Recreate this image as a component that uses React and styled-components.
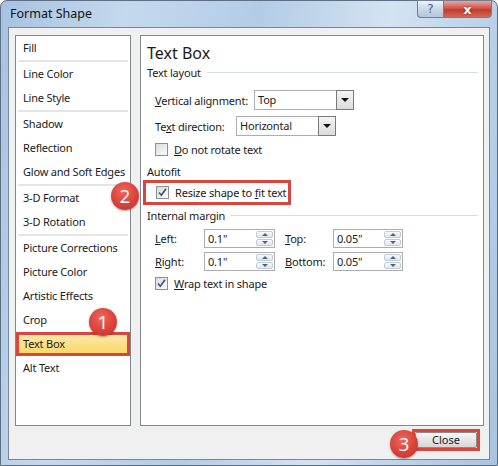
import styled, { createGlobalStyle } from "styled-components";

const GlobalStyle = createGlobalStyle`
  html, body {
    margin: 0;
    padding: 0;
  }
  body {
    width: 498px;
    height: 466px;
    overflow: hidden;
    font-family: "Noto Sans", "Open Sans", sans-serif;
    color: #1b1b1b;
  }
`;

const Window = styled.div`
  width: 498px;
  height: 466px;
  box-sizing: border-box;
  display: flex;
  flex-direction: column;
  padding: 0 7px 5px 7px;
  border: 1px solid #5d6f84;
  border-radius: 7px 7px 0 0;
  background: linear-gradient(100deg, #a7c2df 0%, #c4d9ee 22%, #b3cce6 45%, #d3e3f2 68%, #b9d0e8 86%, #a9c3df 100%);
`;

const TitleBar = styled.div`
  height: 26px;
  display: flex;
  align-items: flex-start;
  margin-right: -2px;
`;

const Title = styled.div`
  font-size: 12.5px;
  line-height: 26px;
  padding-left: 2px;
  color: #111;
`;

const CaptionButton = styled.div`
  height: 18px;
  margin-top: -1px;
  display: flex;
  align-items: center;
  justify-content: center;
  box-sizing: border-box;
  border: 1px solid #6e7f95;
  font-family: "DejaVu Sans", sans-serif;
  font-weight: bold;
`;

const HelpButton = styled(CaptionButton)`
  margin-left: auto;
  width: 26px;
  border-right: none;
  border-radius: 0 0 0 4px;
  background: linear-gradient(#eef3f9, #c9d7e7 50%, #b3c6dc);
  color: #4b5e77;
  font-size: 12px;
  font-weight: normal;
`;

const CloseButton = styled(CaptionButton)`
  width: 49px;
  border-radius: 0 0 4px 0;
  background: linear-gradient(#e9a79f, #d3554b 45%, #c03a31 55%, #d16a55);
  color: #fff;
  font-size: 13px;
  text-shadow: 0 0 2px #6b1410;
`;

const Client = styled.div`
  flex: 1;
  display: flex;
  flex-direction: column;
  background: #f0f0f0;
  border: 1px solid #76879b;
`;

const MainRow = styled.div`
  height: 391px;
  display: flex;
  gap: 9px;
  padding: 7px 5px 0 6px;
`;

const CategoryList = styled.div`
  width: 116px;
  box-sizing: border-box;
  border: 1px solid #828790;
  background: #fff;
  font-size: 11px;
  letter-spacing: -0.2px;
`;

const Item = styled.div`
  position: relative;
  height: 24px;
  box-sizing: border-box;
  line-height: ${(p) => (p.$active ? "18px" : "24px")};
  padding-left: ${(p) => (p.$active ? "4px" : "7px")};
  ${(p) =>
    p.$active &&
    `
    border: 3px solid #d8463e;
    background: linear-gradient(#fde9a6, #fbd86c);
  `}
`;

const Separator = styled.div`
  height: 2px;
  margin: 0 2px;
  background: #e5e5e5;
`;

const Panel = styled.div`
  flex: 1;
  box-sizing: border-box;
  border: 1px solid #828790;
  background: #fff;
  padding: 0 5px 0 6px;
  font-size: 11px;
  letter-spacing: -0.2px;
`;

const Heading = styled.div`
  margin-top: 7px;
  font-size: 16px;
  line-height: 20px;
  letter-spacing: 0;
`;

const GroupHeader = styled.div`
  display: flex;
  align-items: center;
  height: 16px;
  margin-top: ${(p) => p.$top}px;
  &::after {
    content: "";
    flex: 1;
    height: 1px;
    margin-left: 6px;
    background: ${(p) => (p.$line ? "#d5dde3" : "transparent")};
  }
`;

const Row = styled.div`
  display: flex;
  align-items: center;
  padding-left: 8px;
  margin-top: ${(p) => p.$top}px;
  height: ${(p) => p.$h || 20}px;
`;

const Label = styled.span`
  width: ${(p) => p.$w}px;
  flex-shrink: 0;
  white-space: nowrap;
`;

const Key = styled.span`
  text-decoration: underline;
  text-underline-offset: 1px;
`;

const Select = styled.div`
  width: 100px;
  height: 20px;
  box-sizing: border-box;
  display: flex;
  border: 1px solid #abadb3;
  background: #fff;
`;

const SelectValue = styled.div`
  flex: 1;
  line-height: 18px;
  padding-left: 3px;
`;

const DropButton = styled.div`
  width: 18px;
  box-sizing: border-box;
  border: 1px solid #7a7a7a;
  margin: -1px -1px -1px 0;
  display: flex;
  align-items: center;
  justify-content: center;
  background: linear-gradient(#f4f4f4, #dcdcdc);
  &::before {
    content: "";
    border-left: 4px solid transparent;
    border-right: 4px solid transparent;
    border-top: 4px solid #111;
  }
`;

const CheckBox = styled.div`
  width: 13px;
  height: 13px;
  box-sizing: border-box;
  border: 1px solid #8e8f8f;
  background: linear-gradient(135deg, #dcdcdc, #fbfbfb);
  margin-right: 6px;
  display: flex;
  align-items: center;
  justify-content: center;
`;

const Highlight = styled.div`
  position: relative;
  width: 148px;
  height: 25px;
  box-sizing: border-box;
  margin: 1px 0 0 -4px;
  border: 3px solid #d8463e;
  display: flex;
  align-items: center;
  padding-left: 10px;
`;

const MarginGrid = styled.div`
  display: grid;
  grid-template-columns: 49px 71px 58px 70px;
  row-gap: 4px;
  align-items: center;
  padding-left: 8px;
  margin-top: 6px;
  white-space: nowrap;
  & > :nth-child(4n + 3) {
    padding-left: 10px;
  }
`;

const Spin = styled.div`
  height: 19px;
  box-sizing: border-box;
  display: flex;
  border: 1px solid #abadb3;
  background: #fff;
`;

const SpinValue = styled.div`
  flex: 1;
  line-height: 17px;
  padding-left: 3px;
`;

const SpinButtons = styled.div`
  width: 17px;
  display: flex;
  flex-direction: column;
  gap: 1px;
  padding: 1px 1px 1px 0;
`;

const SpinArrow = styled.div`
  flex: 1;
  border: 1px solid #c3cbd4;
  border-radius: 2px;
  background: linear-gradient(#f7f9fb, #dfe6ee);
  display: flex;
  align-items: center;
  justify-content: center;
  &::before {
    content: "";
    border-left: 3px solid transparent;
    border-right: 3px solid transparent;
    ${(p) => (p.$down ? "border-top" : "border-bottom")}: 3px solid #4d6282;
  }
`;

const Footer = styled.div`
  flex: 1;
  display: flex;
  justify-content: flex-end;
  align-items: flex-start;
  padding: 3px 9px 0 0;
`;

const CloseFrame = styled.div`
  position: relative;
  width: 68px;
  height: 22px;
  box-sizing: border-box;
  border: 3px solid #d8463e;
`;

const PushButton = styled.div`
  height: 100%;
  box-sizing: border-box;
  border: 1px solid #8a8a8a;
  border-radius: 2px;
  background: linear-gradient(#f6f6f6, #e6e6e6 50%, #d6d6d6);
  font-size: 11px;
  line-height: 14px;
  text-align: center;
`;

const Badge = styled.div`
  position: absolute;
  left: ${(p) => p.$x}px;
  top: ${(p) => p.$y}px;
  width: 28px;
  height: 28px;
  border-radius: 50%;
  z-index: 2;
  display: flex;
  align-items: center;
  justify-content: center;
  background: radial-gradient(circle at 45% 35%, #ef675d 0%, #d9423a 55%, #b92f29 100%);
  box-shadow: 0 1px 2px rgba(0, 0, 0, 0.35);
  color: #fff;
  font-family: "Open Sans", sans-serif;
  font-size: 19px;
  letter-spacing: 0;
  line-height: 1;
`;

const Check = () => (
  <svg width="11" height="11" viewBox="0 0 11 11">
    <path d="M2 5.5 L4.3 8.2 L9 1.8" fill="none" stroke="#3b4f7e" strokeWidth="1.6" />
  </svg>
);

const groups = [
  ["Fill"],
  ["Line Color", "Line Style"],
  ["Shadow", "Reflection", "Glow and Soft Edges"],
  ["3-D Format", "3-D Rotation"],
  ["Picture Corrections", "Picture Color", "Artistic Effects", "Crop", "Text Box", "Alt Text"],
];

const SpinBox = ({ value }) => (
  <Spin>
    <SpinValue>{value}</SpinValue>
    <SpinButtons>
      <SpinArrow />
      <SpinArrow $down />
    </SpinButtons>
  </Spin>
);

export default function App() {
  return (
    <>
      <GlobalStyle />
      <Window>
        <TitleBar>
          <Title>Format Shape</Title>
          <HelpButton>?</HelpButton>
          <CloseButton>x</CloseButton>
        </TitleBar>
        <Client>
          <MainRow>
            <CategoryList>
              {groups.map((g, gi) => (
                <div key={gi}>
                  {gi > 0 && <Separator />}
                  {g.map((name) => (
                    <Item key={name} $active={name === "Text Box"}>
                      {name}
                      {name === "Text Box" && (
                        <Badge $x={70} $y={-27}>1</Badge>
                      )}
                    </Item>
                  ))}
                </div>
              ))}
            </CategoryList>
            <Panel>
              <Heading>Text Box</Heading>
              <GroupHeader $top={1} $line>Text layout</GroupHeader>
              <Row $top={10}>
                <Label $w={99}>
                  <Key>V</Key>ertical alignment:
                </Label>
                <Select>
                  <SelectValue>Top</SelectValue>
                  <DropButton />
                </Select>
              </Row>
              <Row $top={6}>
                <Label $w={81}>
                  Te<Key>x</Key>t direction:
                </Label>
                <Select>
                  <SelectValue>Horizontal</SelectValue>
                  <DropButton />
                </Select>
              </Row>
              <Row $top={5} $h={16}>
                <CheckBox />
                <span>
                  <Key>D</Key>o not rotate text
                </span>
              </Row>
              <GroupHeader $top={6}>Autofit</GroupHeader>
              <Highlight>
                <Badge $x={-35} $y={-1}>2</Badge>
                <CheckBox>
                  <Check />
                </CheckBox>
                <span>
                  Resize shape to <Key>f</Key>it text
                </span>
              </Highlight>
              <GroupHeader $top={2} $line>Internal margin</GroupHeader>
              <MarginGrid>
                <span>
                  <Key>L</Key>eft:
                </span>
                <SpinBox value={'0.1"'} />
                <span>
                  <Key>T</Key>op:
                </span>
                <SpinBox value={'0.05"'} />
                <span>
                  <Key>R</Key>ight:
                </span>
                <SpinBox value={'0.1"'} />
                <span>
                  <Key>B</Key>ottom:
                </span>
                <SpinBox value={'0.05"'} />
              </MarginGrid>
              <Row $top={4} $h={16}>
                <CheckBox>
                  <Check />
                </CheckBox>
                <span>
                  <Key>W</Key>rap text in shape
                </span>
              </Row>
            </Panel>
          </MainRow>
          <Footer>
            <CloseFrame>
              <Badge $x={-25} $y={-2}>3</Badge>
              <PushButton>Close</PushButton>
            </CloseFrame>
          </Footer>
        </Client>
      </Window>
    </>
  );
}
